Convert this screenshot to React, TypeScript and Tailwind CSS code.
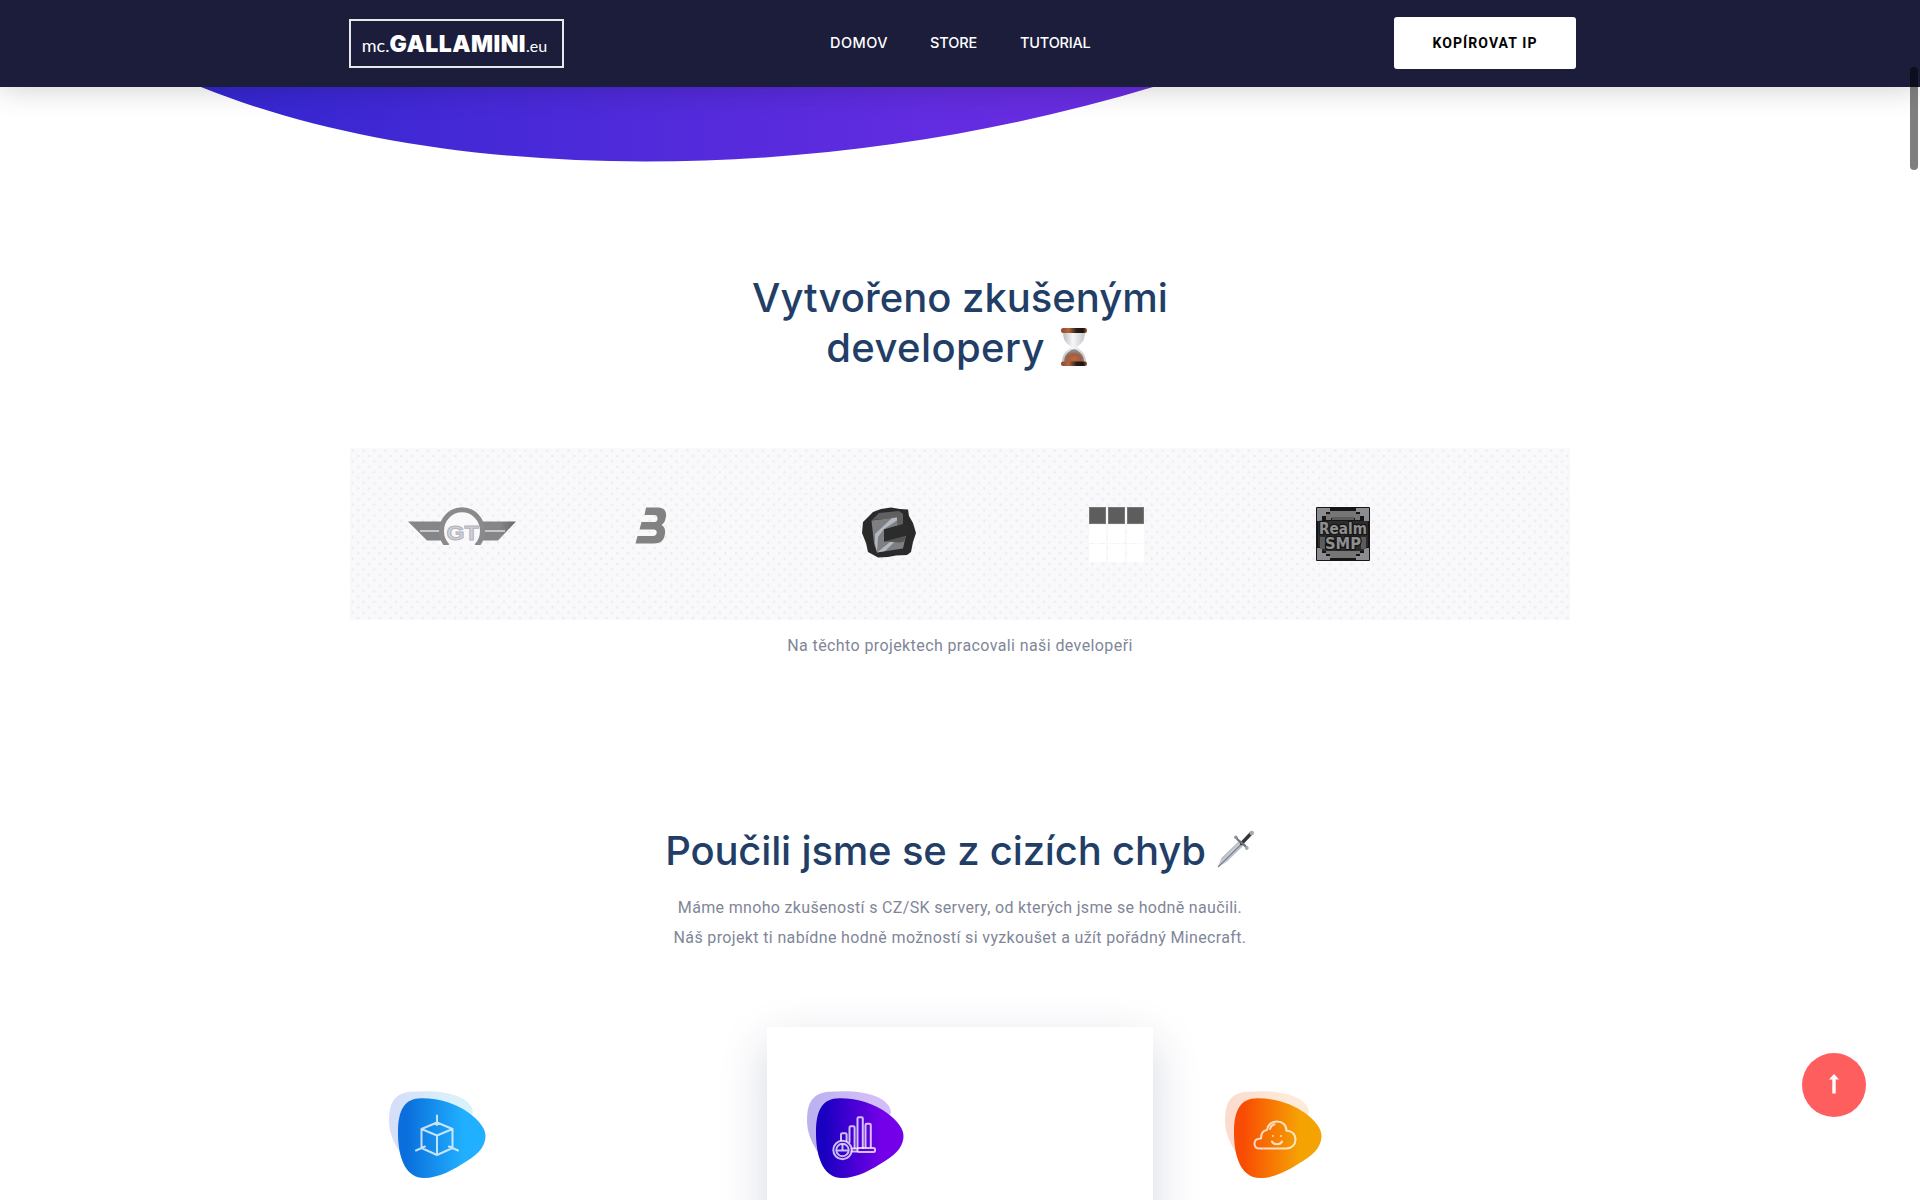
import type { ReactNode } from 'react';

function Hourglass() {
  return (
    <svg className="h-[40px] w-[28px]" viewBox="0 0 28 40">
      <defs>
        <linearGradient id="wood" x1="0" x2="1">
          <stop offset="0" stopColor="#8a4a2b" />
          <stop offset=".3" stopColor="#b5653c" />
          <stop offset=".6" stopColor="#2a1c17" />
          <stop offset=".85" stopColor="#1c1412" />
          <stop offset="1" stopColor="#a2562f" />
        </linearGradient>
        <radialGradient id="sand" cx=".5" cy=".75" r=".6">
          <stop offset="0" stopColor="#c0683c" />
          <stop offset=".6" stopColor="#9c5f43" />
          <stop offset="1" stopColor="#8f8a8c" />
        </radialGradient>
        <linearGradient id="glass" x1="0" x2="1">
          <stop offset="0" stopColor="#b9bdc2" />
          <stop offset=".45" stopColor="#f6f7f8" />
          <stop offset="1" stopColor="#c3c6ca" />
        </linearGradient>
      </defs>
      <path d="M3 5h22c0 9-4 12-9 15.500h-4C7 17 3 14 3 5z" fill="url(#glass)" />
      <path d="M12 20h4c6 3 10 8 10 15H2c0-7 4-12 10-15z" fill="url(#glass)" />
      <path d="M11 23q3-1.500 6 0c4 3 7 6 7 12H4c0-6 3-9 7-12z" fill="url(#sand)" />
      <rect x="1" y="1" width="26" height="5" rx="2.200" fill="url(#wood)" />
      <rect x="1" y="34.500" width="26" height="4.500" rx="2" fill="url(#wood)" />
    </svg>
  );
}

function Dagger() {
  return (
    <svg className="h-[38px] w-[38px]" viewBox="0 0 38 38">
      <defs>
        <linearGradient id="blade" x1="0" y1="0" x2="1" y2="1">
          <stop offset=".3" stopColor="#8b9097" />
          <stop offset=".5" stopColor="#d3d8df" />
          <stop offset=".7" stopColor="#7f858d" />
        </linearGradient>
      </defs>
      <path d="M0.500 37.500 4.500 28 22 11 26.500 15.500 9.500 32z" fill="url(#blade)" />
      <path d="M1 37 25 13.500" stroke="#777d86" strokeWidth="1.100" />
      <path d="m24.500 13.500 9.500-10" stroke="#34363a" strokeWidth="3.400" strokeLinecap="round" />
      <path d="M19 7.500c1 1.500 2 2.800 4.500 4.500s4.500 3.500 6 5.500" fill="none" stroke="#6e737a" strokeWidth="2.200" strokeLinecap="round" />
      <circle cx="18.800" cy="7.300" r="1.700" fill="#8b9097" />
      <circle cx="29.800" cy="18" r="1.900" fill="#a3a8af" />
      <circle cx="34.800" cy="3" r="2.300" fill="#a6abb3" />
    </svg>
  );
}

function GtLogo() {
  return (
    <svg className="h-[38px] w-[108px]" viewBox="0 0 108 38">
      <defs>
        <linearGradient id="wing" gradientUnits="userSpaceOnUse" x1="0" x2="108" y1="0" y2="0">
          <stop offset="0" stopColor="#858588" />
          <stop offset=".85" stopColor="#868688" />
          <stop offset="1" stopColor="#68686b" />
        </linearGradient>
      </defs>
      <path d="M0 14.500h34v19H19z" fill="url(#wing)" />
      <path d="M108 14.500H74v19h16z" fill="url(#wing)" />
      <path d="M12 24h19M77 24h20" stroke="#dcdce2" strokeWidth="1.500" />
      <path d="M39.500 39a20.500 21.200 0 1 1 29 0" fill="#f9f9fb" stroke="#8a8a8d" strokeWidth="5" />
      <text x="54.500" y="33" textAnchor="middle" fontFamily="Liberation Sans, sans-serif" fontWeight="700" fontSize="21" textLength="32" lengthAdjust="spacingAndGlyphs" fill="#cfd2d7" stroke="#b0b3b9" strokeWidth="1">
        GT
      </text>
    </svg>
  );
}

function BLogo() {
  return (
    <svg className="h-[37px] w-[32px]" viewBox="0 0 32 37">
      <path
        d="M11 .500h12c6 0 8.500 3.500 8 8.500-.4 4.500-2 7.500-4.500 9 3 1.500 4 4.500 3.500 8.500-.8 7-4.500 10-11 10H.500L2.500 29h15.500c2.500 0 3.500-1.200 3.700-3.200.2-2-.7-3.300-3.200-3.300H4.500L6.500 15h13c2 0 3-1.500 3-3.500S21.500 8 19.500 8H9.500z"
        fill="#828282"
      />
    </svg>
  );
}

function StoneLogo() {
  return (
    <svg className="h-[51px] w-[54px]" viewBox="0 0 54 51">
      <path d="m11 5 8-3 10-1.500L38 2l8 .500L47 9l4 7 3 10-3 9-2 10-4 3-11 .5L26 50l-10 .5L6 45l-2-9-4-10 1-11z" fill="#2a2a2a" />
      <path d="m10 13 7-7 20-2 4 3v10l-5 2-1-8z" fill="#606060" />
      <path d="m9.500 13.500 25.500-3 1 8-14 4v12l22-6-3 13-26 4-3-9z" fill="#7d7f82" />
      <path d="m30 11 5-.5v3L22 22l-6 8-1 15-2-8v-10zM15 45.500 28 35l6-1.500L23 44z" fill="#b4b8c2" />
      <path d="m22 34.500 15-5 7-1-2 6-4 1z" fill="#555" />
      <path d="m22 22.500 14-4 10-2 4 8-5 4-23 6z" fill="#2c2c2c" />
    </svg>
  );
}

function RealmLogo() {
  return (
    <svg className="h-[54px] w-[54px]" viewBox="0 0 54 54" fontFamily="DejaVu Sans, sans-serif" fontWeight="700">
      <rect width="54" height="54" rx="1" fill="#161616" />
      <path d="M1 1h13v4h-4v4H6v5H1zM53 1H40v4h4v4h4v5h5zM1 53h13v-4h-4v-3H6v-5H1zM53 53H40v-4h4v-3h4v-5h5z" fill="#8b8c90" />
      <path d="M14 4h26v3h4v6h-5v-2H15v2h-5V7h4z" fill="#757575" />
      <path d="M10 43h34v4h-4v4H14v-4h-4z" fill="#757575" />
      <path d="M2 14h50v26h-4v4H6v-4H2z" fill="#2c2c2c" />
      <path d="M16 10h22v3H16zM4 30h5v12H4zM45 30h5v12h-5z" fill="#5c5c5c" />
      <g fill="#8e8e8e" stroke="#161616" strokeWidth="2.500" paintOrder="stroke" textAnchor="middle">
        <text x="27" y="26.500" fontSize="16" textLength="48" lengthAdjust="spacingAndGlyphs">Realm</text>
        <text x="27" y="42" fontSize="15" textLength="36" lengthAdjust="spacingAndGlyphs">SMP</text>
      </g>
    </svg>
  );
}

function GridLogo() {
  return (
    <div className="grid h-[55px] w-[55px] grid-cols-3 grid-rows-3 gap-[1.5px]">
      {Array.from({ length: 9 }, (_, i) => (
        <div key={i} className={i < 3 ? 'border border-[#77777a] bg-[#5d5d5c]' : 'bg-white'} />
      ))}
    </div>
  );
}

function Blob({ id, from, to, backFrom, backTo, children }: { id: string; from: string; to: string; backFrom: string; backTo: string; children: ReactNode }) {
  return (
    <svg className="h-[88px] w-[98px]" viewBox="0 0 98 88">
      <defs>
        <linearGradient id={id} x1="0" x2="1">
          <stop offset=".1" stopColor={from} />
          <stop offset=".75" stopColor={to} />
        </linearGradient>
        <linearGradient id={id + 'b'} x1="0" x2="1">
          <stop offset=".1" stopColor={backFrom} />
          <stop offset=".75" stopColor={backTo} />
        </linearGradient>
      </defs>
      <path d="M0 29C0 10 7 2 22 .700 40-.5 54 0 68 5c10 4 16 10 16 17L40 70 10 60C4 50 0 41 0 29z" fill={`url(#${id}b)`} />
      <path d="M9 42C9 18 16 7.500 32 7.300 50 7 68 13 80 22c11 8 16.500 16 16.500 23 0 9-5.500 17-18.500 25-14 9-28 17-43 17C18 87 9 69 9 42z" fill={`url(#${id})`} />
      <g fill="none" stroke="#fff" strokeOpacity=".75" strokeWidth="2" strokeLinecap="round" strokeLinejoin="round">
        {children}
      </g>
    </svg>
  );
}

function CubeIcon() {
  return (
    <Blob id="blue" from="#0a6fdc" to="#20b0ff" backFrom="#d5dffa" backTo="#d9f1fa">
      <path d="m48 31.500 15.500 6.500v19L48 64l-15.500-7V38zM32.500 38 48 44.500 63.500 38M48 44.500V64M48 24.500v9.500M27 59.500l9-4M69 59.500l-9-4" />
    </Blob>
  );
}

function ChartIcon() {
  return (
    <Blob id="violet" from="#1a00c0" to="#7300e8" backFrom="#bdb2ef" backTo="#d3bdf8">
      <path d="M34 49v-5.500q0-1.300 1.300-1.300h3q1.300 0 1.300 1.300V50M42.500 51V36.500q0-1.300 1.300-1.300h2.500q1.300 0 1.300 1.300V57M50.500 57V27.500q0-1.300 1.300-1.300h2.700q1.300 0 1.300 1.300V57M58.500 56V34q0-1.300 1.300-1.300h2.700q1.300 0 1.300 1.300v22" />
      <rect x="50.500" y="57" width="17.500" height="4" rx="1.500" />
      <path d="M45 57.500h5M45 60.500h5M31 59.500h9M35.500 54v5" />
      <circle cx="35.500" cy="59" r="9.200" />
      <circle cx="35.500" cy="59" r="6.200" />
    </Blob>
  );
}

function CloudIcon() {
  return (
    <Blob id="orange" from="#f84b04" to="#f5a203" backFrom="#fddcd0" backTo="#feead9">
      <path d="M34.500 57.500h27c5 0 9-3.500 9-9s-4-9-9-8.800C61.500 34 57.500 30.500 52 30.500c-5.500 0-9.500 3.500-10 8.500-4 .5-6 3.500-6 8.500-4 0-6.500 2-6.500 5.200 0 3 2 4.800 5 4.800zM45 38c.6-2.500 2-4 4.500-4.700M47 50.500c1.500 3.500 8.500 3.500 10 0M48 45v.1M56 45v.1" />
    </Blob>
  );
}

const navItems = [
  { label: 'DOMOV', cls: 'w-[58px] tracking-[0.45px]' },
  { label: 'STORE', cls: 'w-[48px] tracking-[-0.1px]' },
  { label: 'TUTORIAL', cls: 'w-[71px] tracking-[-0.2px]' },
];

const projects = [<GtLogo />, <BLogo />, <StoneLogo />, <GridLogo />, <RealmLogo />];

export default function App() {
  return (
    <div className="relative h-[1200px] w-full overflow-hidden bg-white font-[Roboto,sans-serif]">
      <header className="relative z-10 h-[87px] bg-[#1b1d3b] shadow-[0_2px_28px_rgba(0,0,0,0.19)]">
        <div className="ml-[349px] flex h-full w-[1227px] items-center justify-between">
          <div className="flex h-[49px] w-[215px] items-baseline justify-center border-2 border-white/90 pt-[6px] pr-[4px] font-[Inter,sans-serif] whitespace-nowrap text-white">
            <span className="font-[Lato,sans-serif] text-[18px] leading-[36px]">mc.</span>
            <span className="text-[23px] font-black tracking-[0.5px]">GALLAMINI</span>
            <span className="font-[Lato,sans-serif] text-[16px]">.eu</span>
          </div>
          <nav className="mr-[37px] -mt-px flex gap-[42px] font-[Inter,sans-serif] text-[14.500px] font-medium text-white">
            {navItems.map((n) => (
              <a key={n.label} className={'whitespace-nowrap ' + n.cls}>{n.label}</a>
            ))}
          </nav>
          <button className="-mt-px h-[52px] w-[182px] rounded-[3px] bg-white text-[14px] font-bold tracking-[1.080px] text-black">KOPÍROVAT IP</button>
        </div>
      </header>

      <svg className="absolute top-[80px] left-[180px] h-[84px] w-[1000px]" viewBox="180 80 1000 84">
        <defs>
          <linearGradient id="hero" x1="0" x2="1">
            <stop offset="0" stopColor="#3226cf" />
            <stop offset=".4" stopColor="#4c2ad9" />
            <stop offset=".75" stopColor="#622ce0" />
            <stop offset="1" stopColor="#6b2ce0" />
          </linearGradient>
        </defs>
        <path d="M180 79 201 87C325 137 480 161.500 645 161.500 830 161.500 1000 133 1153 87l22-8z" fill="url(#hero)" />
      </svg>

      <main>
        <section className="flex flex-col items-center">
          <h2 className="mt-[186px] flex h-[100px] flex-col items-center font-[Inter,sans-serif] text-[40px] leading-[50px] font-medium whitespace-nowrap text-[#223e67]">
            <span>Vytvořeno zkušenými</span>
            <span className="flex items-center pr-[6px]">
              <span className="mr-[15px] tracking-[0.4px]">developery</span>
              <span className="-mt-[2px]"><Hourglass /></span>
            </span>
          </h2>
          <div className="mt-[75px] grid h-[172px] w-[1220px] grid-cols-[227px_227px_227px_227px_1fr] items-start bg-[#f9f9fb] bg-[radial-gradient(circle_at_2.7px_2.7px,#eeeeef_1.1px,transparent_1.7px),radial-gradient(circle_at_8.1px_8.1px,#eeeeef_1.1px,transparent_1.7px)] bg-[size:10.8px_10.8px] pt-[58.5px] pl-[58px]">
            {projects.map((p, i) => (
              <div key={i}>{p}</div>
            ))}
          </div>
          <p className="mt-[11px] text-[16px] leading-[30px] tracking-[0.4px] whitespace-nowrap text-[#7f8698]">Na těchto projektech pracovali naši developeři</p>
        </section>

        <section className="flex flex-col items-center">
          <h2 className="mt-[165px] flex h-[50px] items-center font-[Inter,sans-serif] text-[40px] leading-[50px] font-medium whitespace-nowrap text-[#223e67]">
            <span className="mr-[11px] tracking-[-0.170px]">Poučili jsme se z cizích chyb</span>
            <span className="-mt-[5px]"><Dagger /></span>
          </h2>
          <p className="mt-[17px] flex flex-col items-center text-[16px] leading-[30px] whitespace-nowrap text-[#7f8698]">
            <span className="tracking-[0.330px]">Máme mnoho zkušeností s CZ/SK servery, od kterých jsme se hodně naučili.</span>
            <span className="tracking-[0.360px]">Náš projekt ti nabídne hodně možností si vyzkoušet a užít pořádný Minecraft.</span>
          </p>
          <div className="mt-[74px] grid w-[1222px] grid-cols-[386px_386px_386px] gap-[32px]">
            <div className="h-[400px] pt-[64px] pl-[40px]"><CubeIcon /></div>
            <div className="h-[400px] bg-white pt-[64px] pl-[40px] shadow-[0_16px_44px_rgba(30,40,90,0.18)]"><ChartIcon /></div>
            <div className="h-[400px] pt-[64px] pl-[40px]"><CloudIcon /></div>
          </div>
        </section>
      </main>

      <button className="absolute top-[1053px] left-[1802px] z-20 flex h-[64px] w-[64px] items-center justify-center rounded-full bg-[#ff5e5f]">
        <svg className="-mt-[3px] h-[20px] w-[12px]" viewBox="0 0 12 20">
          <path d="m6 0 5 5.500H7.700V19.500H4.300V5.500H1z" fill="#fff" />
        </svg>
      </button>
      <div className="absolute top-[67px] left-[1910px] z-20 h-[103px] w-[8px] rounded-full bg-black/50" />
    </div>
  );
}
